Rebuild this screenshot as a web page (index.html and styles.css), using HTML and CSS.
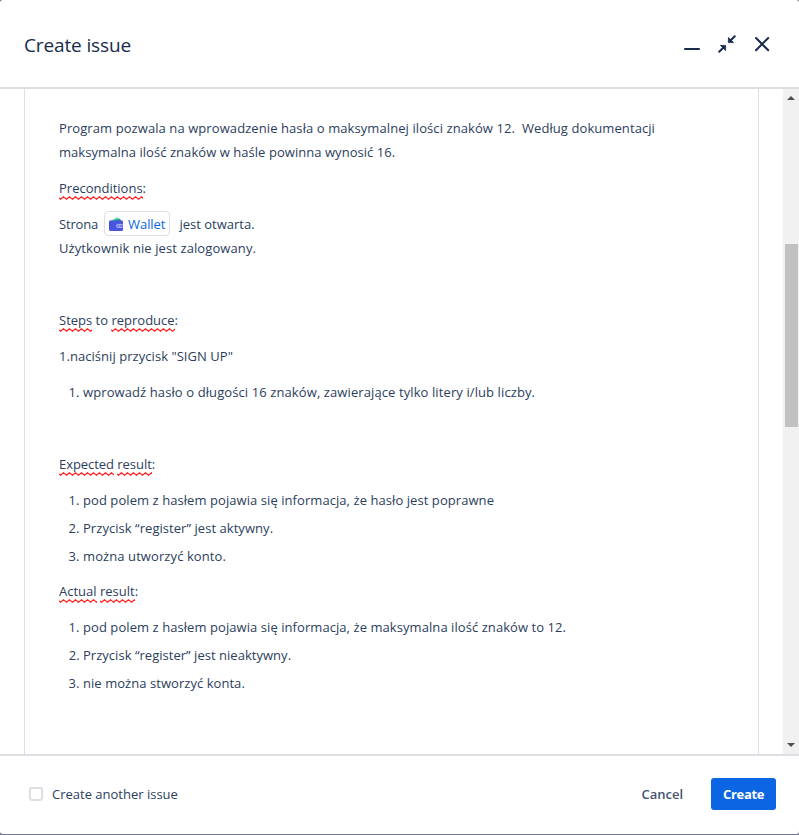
FILE: index.html
```html
<!DOCTYPE html>
<html lang="pl">
<head>
<meta charset="utf-8">
<title>Create issue</title>
<link rel="stylesheet" href="styles.css">
</head>
<body>
<div class="modal">
  <header class="header">
    <h1 class="title">Create issue</h1>
    <div class="actions">
      <svg class="icon" viewBox="0 0 24 24"><path d="M5 17h14" fill="none" stroke="currentColor" stroke-width="2" stroke-linecap="round"/></svg>
      <svg class="icon" viewBox="0 0 24 24"><path d="M19.8 4.2L15 9M4.2 19.8L9 15" fill="none" stroke="currentColor" stroke-width="2" stroke-linecap="round"/><path d="M13.4 5.4v5.2h5.2zM10.6 18.6v-5.2H5.4z" fill="currentColor" stroke="currentColor" stroke-width=".8" stroke-linejoin="round"/></svg>
      <svg class="icon" viewBox="0 0 24 24"><path d="M6 6l12.2 12.2M18.2 6L6 18.2" fill="none" stroke="currentColor" stroke-width="2" stroke-linecap="round"/></svg>
    </div>
  </header>
  <main class="body">
    <div class="editor">
      <p><span class="ls-8">Program pozwala na wprowadzenie hasła o maksymalnej ilości znaków 12.&nbsp; Według dokumentacji</span><br><span class="ls-5">maksymalna ilość znaków w haśle powinna wynosić 16.</span></p>
      <p><span class="typo">Preconditions</span>:</p>
      <p><span class="lead">Strona</span><a class="chip"><svg class="wallet" viewBox="0 0 14 14"><path d="M1 4.2L8 .4l1.5 1.4L12.5 4.2z" fill="#3ccfa4"/><path d="M4 4.2L10.6 1.6l2.2 2.6z" fill="#259d8c"/><rect y="3.6" width="14" height="10.4" rx="1.4" fill="#4a55df"/><path d="M14 6.9H8.6a1.6 1.6 0 0 0-1.6 1.6v.8a1.6 1.6 0 0 0 1.6 1.6H14z" fill="#6f78ea"/><path d="M13.5 7.4H8.8a1.1 1.1 0 0 0-1.1 1.1v.8a1.1 1.1 0 0 0 1.1 1.1h4.7M9.6 9h1.6" fill="none" stroke="#b9befa" stroke-width=".8"/></svg><span>Wallet</span></a>jest otwarta.<br><span class="ls-9">Użytkownik nie jest zalogowany.</span></p>
      <p><br></p>
      <p><span class="typo">Steps</span> to <span class="typo">reproduce</span>:</p>
      <p class="ls-5">1.naciśnij przycisk "SIGN UP"</p>
      <ol>
        <li class="ls-10">wprowadź hasło o długości 16 znaków, zawierające tylko litery i/lub liczby.</li>
      </ol>
      <p><br></p>
      <p class="tight"><span class="typo">Expected</span> <span class="typo">result</span>:</p>
      <ol>
        <li class="ls-7">pod polem z hasłem pojawia się informacja, że hasło jest poprawne</li>
        <li class="ls-5">Przycisk “register” jest aktywny.</li>
        <li class="ls-9">można utworzyć konto.</li>
      </ol>
      <p class="after-list"><span class="typo">Actual</span> <span class="typo">result</span>:</p>
      <ol>
        <li class="ls-7">pod polem z hasłem pojawia się informacja, że maksymalna ilość znaków to 12.</li>
        <li class="ls-3">Przycisk “register” jest nieaktywny.</li>
        <li class="ls-5">nie można stworzyć konta.</li>
      </ol>
    </div>
    <div class="scrollbar">
      <i class="arrow up"></i>
      <i class="thumb"></i>
      <i class="arrow down"></i>
    </div>
  </main>
  <footer class="footer">
    <label class="another"><i class="box"></i>Create another issue</label>
    <div class="buttons">
      <button class="btn">Cancel</button>
      <button class="btn primary">Create</button>
    </div>
  </footer>
</div>
</body>
</html>
```
FILE: styles.css
```css
* { box-sizing: border-box; }
body {
  margin: 0;
  background: #6f7c93;
  color: #2c3e5d;
  font: 13px/24px "Open Sans", "Noto Sans", sans-serif;
}
.modal {
  display: flex;
  flex-direction: column;
  height: 834px;
  background: #fff;
  border-radius: 3px;
  overflow: hidden;
}
.header {
  flex: none;
  display: flex;
  align-items: center;
  justify-content: space-between;
  height: 89px;
  padding: 0 25px 0 24px;
  border-bottom: 2px solid #dcdfe4;
  color: #172b4d;
}
.title {
  margin: 3px 0 0;
  font-size: 19px;
  font-weight: 500;
  letter-spacing: -0.13px;
}
.actions { display: flex; gap: 11px; }
.icon { width: 24px; height: 24px; }
.body { flex: 1; min-height: 0; display: flex; overflow: hidden; }
.editor {
  flex: 1;
  margin: 0 24px;
  padding: 27px 34px 0;
  border: solid #dcdfe4;
  border-width: 0 1px;
  overflow: hidden;
}
p { margin: 0 0 12px; white-space: nowrap; }
ol { margin: 0 0 12px; padding-left: 24px; white-space: nowrap; }
li + li { margin-top: 4px; }
ol + .after-list { margin-top: -1px; }
.tight { letter-spacing: -0.05px; }
.ls-3 { letter-spacing: 0.03px; }
.ls-5 { letter-spacing: 0.05px; }
.ls-7 { letter-spacing: 0.067px; }
.ls-8 { letter-spacing: 0.084px; }
.ls-9 { letter-spacing: 0.093px; }
.ls-10 { letter-spacing: 0.1px; }
.lead { letter-spacing: -0.18px; }
.typo {
  padding-bottom: 3px;
  background: url("data:image/svg+xml,%3Csvg xmlns='http://www.w3.org/2000/svg' width='6' height='4'%3E%3Cpath d='M-1.5 .8L1.5 3.2 4.5 .8 7.5 3.2' fill='none' stroke='%23f22' stroke-width='1.3'/%3E%3C/svg%3E") 0 100% / 6px 4px repeat-x;
}
.chip {
  display: inline-flex;
  align-items: center;
  gap: 5px;
  height: 25px;
  margin: -4px 9px -4px 6px;
  padding: 1px 4px 0;
  border: 1px solid #dcdfe4;
  border-radius: 4px;
  color: #0c66e4;
  letter-spacing: -0.05px;
  vertical-align: -2px;
}
.wallet { width: 14px; height: 14px; }
.scrollbar {
  flex: none;
  display: flex;
  flex-direction: column;
  align-items: center;
  width: 16px;
  padding: 7px 0;
  background: #f1f1f1;
}
.arrow { border: 4px solid transparent; }
.up { border-top: 0; border-bottom-color: #505050; }
.down { margin-top: auto; border-bottom: 0; border-top-color: #505050; }
.thumb { width: 13px; height: 183px; margin-top: 144px; background: #c1c1c1; }
.footer {
  flex: none;
  display: flex;
  align-items: center;
  justify-content: space-between;
  height: 80px;
  padding: 0 23px 2px 29px;
  border-top: 2px solid #dcdfe4;
}
.another { display: flex; align-items: center; gap: 9px; }
.box { width: 14px; height: 14px; border: 2px solid #dcdfe4; border-radius: 3px; }
.buttons { display: flex; gap: 16px; }
.btn {
  height: 32px;
  padding: 0 12px;
  border: 0;
  border-radius: 3px;
  background: none;
  color: #44546f;
  font: 600 13px/32px "Open Sans", sans-serif;
}
.primary { width: 65px; background: #0c66e4; color: #fff; font-weight: 700; letter-spacing: -0.3px; }
```
